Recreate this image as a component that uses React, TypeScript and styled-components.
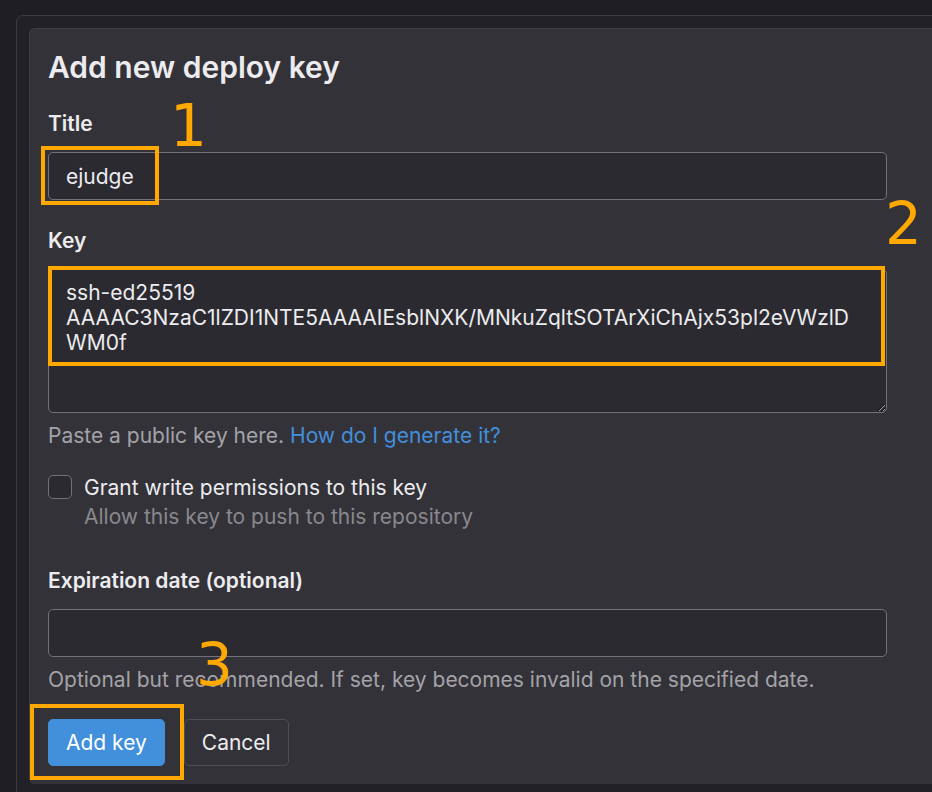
import React, { useState } from "react";
import styled, { createGlobalStyle } from "styled-components";

const GlobalStyle = createGlobalStyle`
  html, body {
    margin: 0;
    padding: 0;
    background: #1f1e24;
    overflow: hidden;
  }
  body {
    font-family: Inter, "Noto Sans", "Liberation Sans", sans-serif;
    color: #ececef;
  }
`;

const Frame = styled.div`
  margin: 15px 0 0 16px;
  width: 1000px;
  height: 820px;
  box-sizing: border-box;
  padding: 12px 0 0 12px;
  background: #222127;
  border: 1px solid #3c3b41;
  border-radius: 7px;
`;

const Card = styled.form`
  position: relative;
  box-sizing: border-box;
  width: 960px;
  padding: 18px 18px 18px 18px;
  background: #333238;
  border-top: 1px solid #3f3e44;
  border-left: 1px solid #3f3e44;
  border-radius: 6px;
`;

const Column = styled.div`
  width: 839px;
  display: flex;
  flex-direction: column;
`;

const Heading = styled.h2`
  margin: 0 0 24px;
  font-size: 30px;
  line-height: 40px;
  font-weight: 600;
  color: #ececef;
`;

const Label = styled.label<{ $gap?: number }>`
  display: block;
  font-size: 21px;
  line-height: 26px;
  font-weight: 600;
  color: #ececef;
  margin-top: ${(p) => p.$gap ?? 0}px;
  margin-bottom: 15px;
`;

const TextInput = styled.input`
  box-sizing: border-box;
  width: 100%;
  height: 48px;
  padding: 0 17px;
  background: #2b2a30;
  border: 1px solid #737278;
  border-radius: 5px;
  color: #ececef;
  font-family: inherit;
  font-size: 21px;
  outline: none;
`;

const KeyArea = styled.textarea`
  box-sizing: border-box;
  width: 100%;
  height: 144px;
  padding: 10px 17px;
  background: #2b2a30;
  border: 1px solid #737278;
  border-radius: 5px;
  color: #ececef;
  font-family: inherit;
  font-size: 21px;
  line-height: 25px;
  outline: none;
  resize: vertical;
  overflow-wrap: anywhere;
`;

const Help = styled.p`
  margin: 10px 0 0;
  font-size: 21px;
  line-height: 26px;
  color: #a4a3a8;
`;

const HelpLink = styled.a`
  color: #428fdc;
  text-decoration: none;
`;

const CheckRow = styled.div`
  display: flex;
  gap: 12px;
  margin-top: 26px;
`;

const Box = styled.span`
  flex: none;
  box-sizing: border-box;
  width: 24px;
  height: 24px;
  border: 1px solid #737278;
  border-radius: 5px;
  background: #2b2a30;
`;

const CheckText = styled.div`
  display: flex;
  flex-direction: column;
  gap: 3px;
  font-size: 21px;
  line-height: 26px;
  margin-top: 0;
`;

const SubText = styled.span`
  color: #89888d;
`;

const Actions = styled.div`
  display: flex;
  gap: 19px;
  margin-top: 26px;
`;

const Button = styled.button<{ $primary?: boolean }>`
  box-sizing: border-box;
  height: 47px;
  padding: 0 17px;
  border-radius: 5px;
  font-family: inherit;
  font-size: 21px;
  background: ${(p) => (p.$primary ? "#428fdc" : "transparent")};
  border: 1px solid ${(p) => (p.$primary ? "#428fdc" : "#4f4e55")};
  color: ${(p) => (p.$primary ? "#ffffff" : "#ececef")};
`;

const Mark = styled.div<{ $x: number; $y: number; $w: number; $h: number }>`
  position: absolute;
  left: ${(p) => p.$x}px;
  top: ${(p) => p.$y}px;
  width: ${(p) => p.$w}px;
  height: ${(p) => p.$h}px;
  box-sizing: border-box;
  border: 4px solid #ffa800;
  pointer-events: none;
`;

const Num = styled.span<{ $x: number; $y: number }>`
  position: absolute;
  left: ${(p) => p.$x}px;
  top: ${(p) => p.$y}px;
  font-family: "DejaVu Sans", sans-serif;
  font-size: 58px;
  line-height: 1;
  color: #ffa800;
  pointer-events: none;
`;

const App = () => {
  const [title, setTitle] = useState("ejudge");
  const [key, setKey] = useState(
    "ssh-ed25519 AAAAC3NzaC1lZDI1NTE5AAAAIEsblNXK/MNkuZqltSOTArXiChAjx53pl2eVWzlDWM0f",
  );
  const [expires, setExpires] = useState("");

  return (
    <>
      <GlobalStyle />
      <Frame>
        <Card onSubmit={(e) => e.preventDefault()}>
          <Column>
            <Heading>Add new deploy key</Heading>

            <Label>Title</Label>
            <TextInput value={title} onChange={(e) => setTitle(e.target.value)} />

            <Label $gap={28}>Key</Label>
            <KeyArea value={key} onChange={(e) => setKey(e.target.value)} />
            <Help>
              Paste a public key here. <HelpLink href="#">How do I generate it?</HelpLink>
            </Help>

            <CheckRow>
              <Box />
              <CheckText>
                <span>Grant write permissions to this key</span>
                <SubText>Allow this key to push to this repository</SubText>
              </CheckText>
            </CheckRow>

            <Label $gap={38}>Expiration date (optional)</Label>
            <TextInput value={expires} onChange={(e) => setExpires(e.target.value)} />
            <Help>Optional but recommended. If set, key becomes invalid on the specified date.</Help>

            <Actions>
              <Button $primary>Add key</Button>
              <Button type="button">Cancel</Button>
            </Actions>
          </Column>

          {/* annotations drawn on top of the form */}
          <Mark $x={11} $y={117} $w={118} $h={59} />
          <Num $x={140} $y={68}>1</Num>
          <Mark $x={18} $y={237} $w={837} $h={100} />
          <Num $x={855} $y={166}>2</Num>
          <Mark $x={0} $y={675} $w={154} $h={76} />
          <Num $x={166} $y={607}>3</Num>
        </Card>
      </Frame>
    </>
  );
};

export default App;
